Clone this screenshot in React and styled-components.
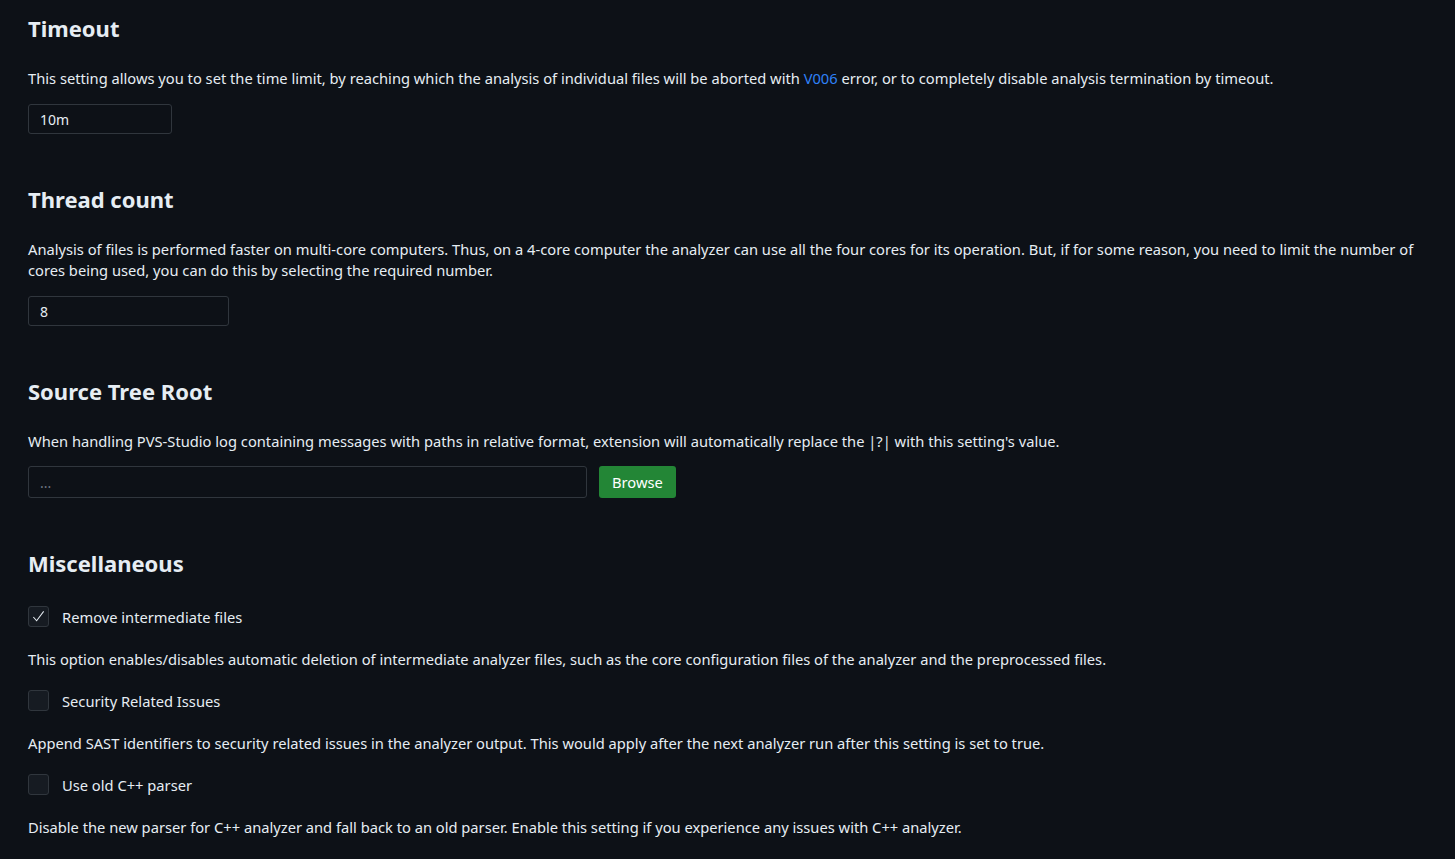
import styled, { createGlobalStyle } from "styled-components";

const Global = createGlobalStyle`
  html, body {
    margin: 0;
    padding: 0;
    background: #0d1117;
  }
  body {
    font-family: "Noto Sans", "Open Sans", sans-serif;
    color: #e6edf3;
  }
`;

const Page = styled.div`
  min-height: 859px;
  box-sizing: border-box;
  padding: 13px 28px 20px 28px;
  background: #0d1117;
`;

const Section = styled.section`
  margin-bottom: 50px;
`;

const Heading = styled.h2`
  margin: 0 0 ${(p) => p.$gap ?? 25}px;
  font-size: 22px;
  line-height: 30px;
  font-weight: 700;
  color: #e6edf3;
`;

const Text = styled.p`
  margin: 0 0 ${(p) => p.$gap ?? 15}px;
  font-size: 14.7px;
  line-height: 21px;
  color: #e6edf3;
`;

const Link = styled.a`
  color: #2f81f7;
  text-decoration: none;
`;

const Input = styled.input`
  display: block;
  box-sizing: border-box;
  width: ${(p) => p.$width}px;
  height: ${(p) => p.$height ?? 30}px;
  padding: 0 11px;
  background: #0d1117;
  border: 1px solid #30363d;
  border-radius: 3px;
  color: #e6edf3;
  font-family: inherit;
  font-size: 14px;
  outline: none;
  &::placeholder {
    color: #6e7681;
  }
`;

const Row = styled.div`
  display: flex;
  align-items: center;
  gap: 12px;
`;

const Button = styled.button`
  height: 32px;
  padding: 0 13px;
  background: #238636;
  border: none;
  border-radius: 3px;
  color: #ffffff;
  font-family: inherit;
  font-size: 14.7px;
  cursor: pointer;
`;

const CheckRow = styled.label`
  display: flex;
  align-items: center;
  gap: 13px;
  height: 21px;
  margin-bottom: 22px;
  font-size: 14.7px;
  color: #e6edf3;
`;

const Box = styled.span`
  box-sizing: border-box;
  width: 21px;
  height: 21px;
  border: 1px solid #30363d;
  border-radius: 3px;
  background: #161b22;
  display: flex;
  align-items: center;
  justify-content: center;
`;

const Check = ({ checked, label }) => (
  <CheckRow>
    <Box>
      {checked && (
        <svg width="15" height="15" viewBox="0 0 16 16" fill="none">
          <path d="M2.5 8.5 L6 12.5 L13.5 2.5" stroke="#e6edf3" strokeWidth="1.1" />
        </svg>
      )}
    </Box>
    {label}
  </CheckRow>
);

export default function App() {
  return (
    <>
      <Global />
      <Page>
        <Section>
          <Heading>Timeout</Heading>
          <Text>
            This setting allows you to set the time limit, by reaching which the analysis of individual
            files will be aborted with <Link href="#">V006</Link> error, or to completely disable analysis
            termination by timeout.
          </Text>
          <Input $width={144} defaultValue="10m" />
        </Section>

        <Section>
          <Heading>Thread count</Heading>
          <Text>
            Analysis of files is performed faster on multi-core computers. Thus, on a 4-core computer the
            analyzer can use all the four cores for its operation. But, if for some reason, you need to
            limit the number of cores being used, you can do this by selecting the required number.
          </Text>
          <Input $width={201} defaultValue="8" />
        </Section>

        <Section>
          <Heading>Source Tree Root</Heading>
          <Text $gap={14}>
            When handling PVS-Studio log containing messages with paths in relative format, extension will
            automatically replace the |?| with this setting's value.
          </Text>
          <Row>
            <Input $width={559} $height={32} placeholder="..." />
            <Button>Browse</Button>
          </Row>
        </Section>

        <section>
          <Heading $gap={28}>Miscellaneous</Heading>
          <Check checked label="Remove intermediate files" />
          <Text $gap={20}>
            This option enables/disables automatic deletion of intermediate analyzer files, such as the core
            configuration files of the analyzer and the preprocessed files.
          </Text>
          <Check label="Security Related Issues" />
          <Text $gap={20}>
            Append SAST identifiers to security related issues in the analyzer output. This would apply after
            the next analyzer run after this setting is set to true.
          </Text>
          <Check label="Use old C++ parser" />
          <Text $gap={20}>
            Disable the new parser for C++ analyzer and fall back to an old parser. Enable this setting if you
            experience any issues with C++ analyzer.
          </Text>
        </section>
      </Page>
    </>
  );
}
